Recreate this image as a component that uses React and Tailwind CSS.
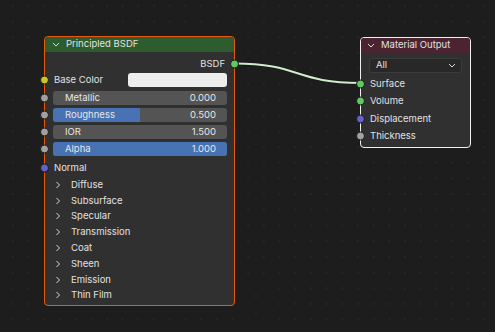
import React from "react";

const font = { fontFamily: "Inter, 'DejaVu Sans', sans-serif" };

function Socket({ color, side = "left", offset = "left-[-5px]" }) {
  return (
    <span
      className={`absolute top-1/2 -translate-y-1/2 block w-[9px] h-[9px] rounded-full border-[1.5px] border-[#1b1b1b] ${
        side === "left" ? offset : "right-[-5px]"
      } ${color}`}
    />
  );
}

function Chevron({ dir = "down", className = "" }) {
  if (dir === "right") {
    return (
      <svg width="6" height="8" viewBox="0 0 6 8" className={className}>
        <path d="M1.5 1 L4.5 4 L1.5 7" fill="none" stroke="#d8d8d8" strokeWidth="1" />
      </svg>
    );
  }
  return (
    <svg width="8" height="5" viewBox="0 0 8 5" className={className}>
      <path d="M1 1 L4 4 L7 1" fill="none" stroke="#d8d8d8" strokeWidth="1" />
    </svg>
  );
}

function Slider({ label, value, fill, socket }) {
  return (
    <div className="relative h-[14px] pl-[8px] pr-[7px]">
      <Socket color={socket} />
      <div className="relative h-full rounded-[3px] bg-[#545454] overflow-hidden">
        <div className="absolute inset-y-0 left-0 bg-[#4772b3]" style={{ width: fill }} />
        <div className="relative flex items-center justify-between h-full pl-[12px] pr-[11px] text-[#e6e6e6]">
          <span>{label}</span>
          <span>{value}</span>
        </div>
      </div>
    </div>
  );
}

const panels = ["Diffuse", "Subsurface", "Specular", "Transmission", "Coat", "Sheen", "Emission", "Thin Film"];

function PrincipledNode() {
  return (
    <div className="absolute left-[44px] top-[36px] w-[191px] h-[270px] rounded-[4px] border border-[#e8590c] bg-[#303030] text-[9.5px] text-[#e1e1e1]">
      <div className="flex items-center h-[15px] rounded-t-[3px] bg-[#2d5c2e] pl-[7px] gap-[6px]">
        <Chevron />
        <span>Principled BSDF</span>
      </div>
      <div className="pt-[4px]">
        <div className="relative flex items-center justify-end h-[16px] pr-[9px]">
          <span>BSDF</span>
          <Socket color="bg-[#63c763]" side="right" />
        </div>
        <div className="relative flex items-center h-[16px] pl-[9px] pr-[7px]">
          <Socket color="bg-[#c7c729]" />
          <span className="flex-1">Base Color</span>
          <div className="w-[99px] h-[14px] rounded-[3px] bg-[#ededed]" />
        </div>
        <div className="flex flex-col gap-[3px] mt-[3px]">
          <Slider label="Metallic" value="0.000" fill="0%" socket="bg-[#a1a1a1]" />
          <Slider label="Roughness" value="0.500" fill="50%" socket="bg-[#a1a1a1]" />
          <Slider label="IOR" value="1.500" fill="0%" socket="bg-[#a1a1a1]" />
          <Slider label="Alpha" value="1.000" fill="100%" socket="bg-[#a1a1a1]" />
        </div>
        <div className="relative flex items-center h-[16px] mt-[4px] pl-[9px]">
          <Socket color="bg-[#6363c7]" />
          <span>Normal</span>
        </div>
        <div className="flex flex-col pt-[1px]">
          {panels.map((p) => (
            <div key={p} className="flex items-center h-[15.8px] pl-[10px] gap-[10px]">
              <Chevron dir="right" />
              <span>{p}</span>
            </div>
          ))}
        </div>
      </div>
    </div>
  );
}

function OutputNode() {
  const inputs = [
    ["Surface", "bg-[#63c763]"],
    ["Volume", "bg-[#63c763]"],
    ["Displacement", "bg-[#6363c7]"],
    ["Thickness", "bg-[#a1a1a1]"],
  ];
  return (
    <div className="absolute left-[360px] top-[37px] w-[111px] h-[111px] rounded-[4px] border border-[#f0f0f0] bg-[#303030] text-[9.5px] text-[#e1e1e1]">
      <div className="flex items-center h-[15px] rounded-t-[3px] bg-[#4a2431] pl-[6px] gap-[6px]">
        <Chevron />
        <span>Material Output</span>
      </div>
      <div className="mx-[8px] mt-[5px] h-[15px] flex items-center justify-between rounded-[3px] border border-[#3c3c3c] bg-[#282828] pl-[6px] pr-[5px]">
        <span>All</span>
        <Chevron />
      </div>
      <div className="flex flex-col mt-[2px]">
        {inputs.map(([name, c]) => (
          <div key={name} className="relative flex items-center h-[17.5px] pl-[9px]">
            <Socket color={c} />
            <span>{name}</span>
          </div>
        ))}
      </div>
    </div>
  );
}

export default function App() {
  return (
    <div
      className="relative w-[495px] h-[332px] overflow-hidden bg-[#1d1d1d] bg-[radial-gradient(circle,#262626_0.9px,transparent_1.1px)] bg-[size:15.7px_15.7px] bg-[position:5px_-2px]"
      style={font}
    >
      <svg className="absolute inset-0" width="495" height="332">
        <path d="M234.5 63.5 C 300 63.5, 295 83, 360.5 83" fill="none" stroke="#1a1a1a" strokeWidth="4" />
        <path d="M234.5 63.5 C 300 63.5, 295 83, 360.5 83" fill="none" stroke="#cdeecb" strokeWidth="2" />
      </svg>
      <PrincipledNode />
      <OutputNode />
    </div>
  );
}
